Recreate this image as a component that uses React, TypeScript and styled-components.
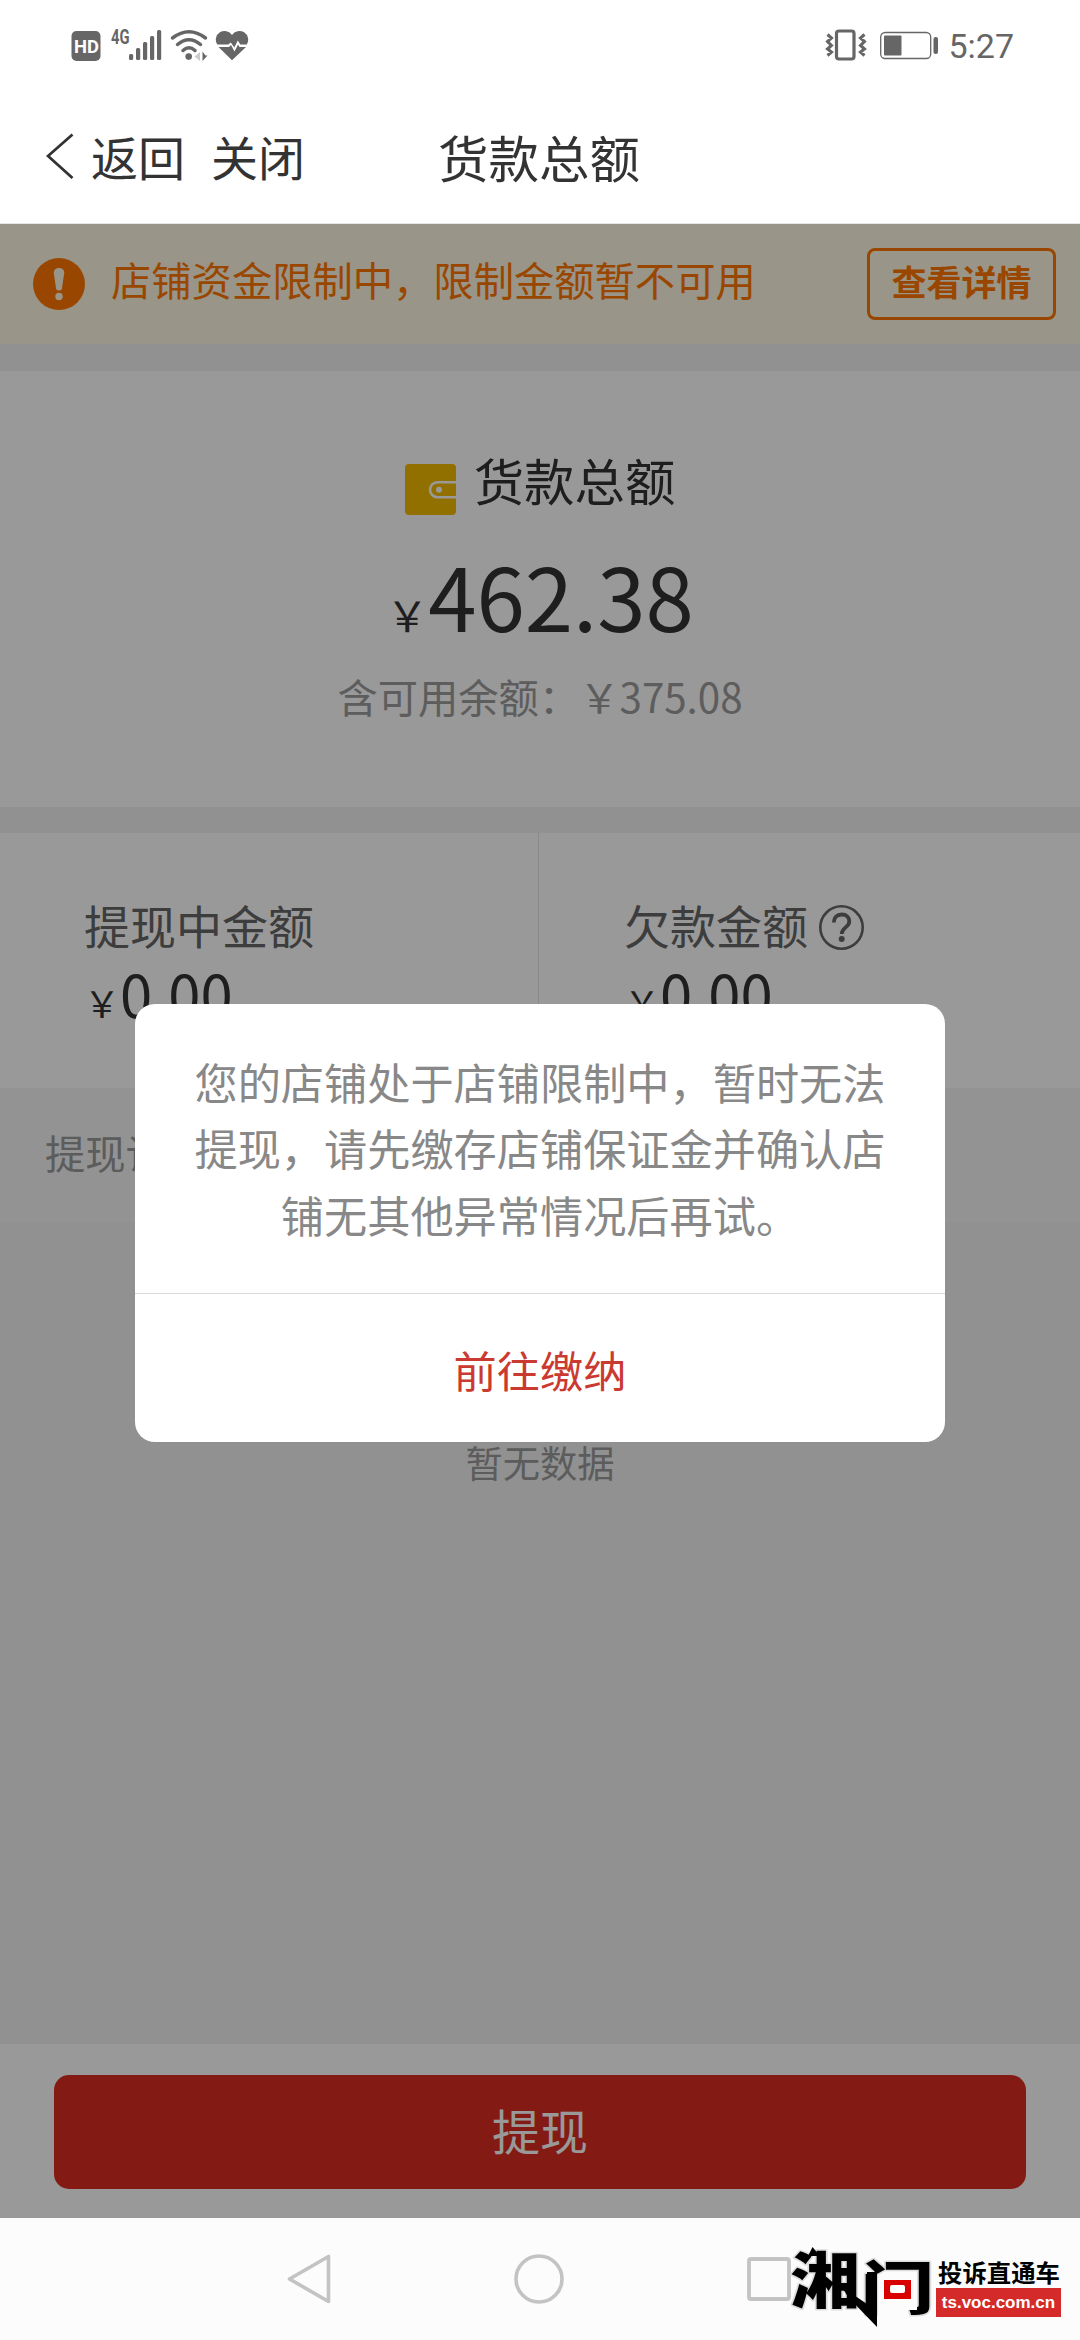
import React from 'react';
import styled, { createGlobalStyle } from 'styled-components';

const cjk = `"Noto Sans CJK SC", "Noto Sans", sans-serif`;

const GlobalStyle = createGlobalStyle`
  body { margin: 0; background: #fff; }
  *, *::before, *::after { box-sizing: border-box; }
  svg { display: block; }
`;

const Screen = styled.div`
  width: 1080px;
  height: 2340px;
  display: flex;
  flex-direction: column;
  overflow: hidden;
  background: #fff;
  font-family: ${cjk};
  color: #333;
  white-space: nowrap;
`;

const StatusBar = styled.header`
  height: 88px;
  padding: 18px 66px 0 71px;
  display: flex;
  justify-content: space-between;
  align-items: flex-start;
`;

const StatusGroup = styled.div`
  padding-top: 10px;
  display: flex;
  align-items: flex-start;
`;

const Clock = styled.span`
  margin-left: 9px;
  font: 400 34px/36px Roboto, sans-serif;
  color: #666;
`;

const NavBar = styled.nav`
  height: 136px;
  padding: 0 0 0 46px;
  border-bottom: 1px solid #e6e6e6;
  display: grid;
  grid-template-columns: 392px 204px 1fr;
  align-items: center;
`;

const NavActions = styled.div`
  display: flex;
  align-items: center;
`;

const NavText = styled.span<{ $gap: number }>`
  margin-left: ${(p) => p.$gap}px;
  font-size: 47px;
  line-height: 60px;
`;

const NavTitle = styled.h1`
  margin: 0;
  font-size: 50.5px;
  line-height: 60px;
  font-weight: 400;
`;

const Content = styled.main`
  position: relative;
  height: 1994px;
  display: flex;
  flex-direction: column;
  background: #f2f2f2;
`;

const Notice = styled.section`
  height: 120px;
  padding: 0 24px 1px 33px;
  display: flex;
  align-items: center;
  background: #fff9e3;
  color: #ff7700;
`;

const NoticeText = styled.p`
  margin: 0 auto 9px 26px;
  font-size: 40.3px;
  line-height: 60px;
`;

const DetailButton = styled.button`
  width: 189px;
  height: 72px;
  padding: 0 0 6px;
  border: 3px solid #ff7700;
  border-radius: 8px;
  background: transparent;
  color: #ff7700;
  font: 700 35px/60px ${cjk};
`;

const TotalCard = styled.section`
  height: 436px;
  margin: 27px 0 26px;
  padding-top: 74px;
  display: flex;
  flex-direction: column;
  align-items: center;
  background: #fff;
`;

const TotalTitle = styled.div`
  height: 70px;
  display: flex;
  align-items: center;
  gap: 18px;
  font-size: 50.4px;
  line-height: 70px;
  & > svg { margin-top: 19px; }
`;

const Money = styled.div<{ $size: number; $height: number }>`
  height: ${(p) => p.$height}px;
  font-size: ${(p) => p.$size}px;
  line-height: ${(p) => p.$height}px;
`;

const Yen = styled.span<{ $size: number }>`
  font-size: ${(p) => p.$size}px;
`;

const Available = styled.p`
  margin: -7px 0 0;
  font-size: 40.3px;
  line-height: 60px;
  color: #9c9c9c;
`;

const Cells = styled.section`
  height: 255px;
  display: grid;
  grid-template-columns: 539px 541px;
  background: #fff;
`;

const Cell = styled.div<{ $divided?: boolean }>`
  padding: 61px 0 0 ${(p) => (p.$divided ? 84 : 85)}px;
  border-right: ${(p) => (p.$divided ? '1px solid #e4e4e4' : '0')};
`;

const CellLabel = styled.div`
  height: 60px;
  display: flex;
  align-items: center;
  gap: 11px;
  font-size: 46px;
  line-height: 60px;
  color: #666;
  & > svg { margin-top: 7px; }
`;

const RecordBand = styled.div`
  height: 134px;
  padding: 34px 45px 0;
  background: #f5f5f5;
  font-size: 40.3px;
  line-height: 60px;
  color: #999;
`;

const Empty = styled.p`
  margin: 210px 0 0;
  text-align: center;
  font-size: 37.3px;
  line-height: 60px;
  color: #9a9a9a;
`;

const Footer = styled.footer`
  height: 174px;
  margin-top: auto;
  padding: 31px 54px 29px;
  background: #fff;
`;

const WithdrawButton = styled.button`
  width: 972px;
  height: 114px;
  padding: 0 0 6px;
  border: 0;
  border-radius: 15px;
  background: #da2e22;
  color: #fff;
  font: 400 48px/70px ${cjk};
`;

const Overlay = styled.div`
  position: absolute;
  inset: 0;
  padding: 780px 135px 0;
  background: rgba(0, 0, 0, 0.4);
`;

const Dialog = styled.div`
  height: 438px;
  border-radius: 20px;
  background: #fff;
`;

const DialogText = styled.p`
  height: 290px;
  margin: 0;
  padding-top: 44px;
  border-bottom: 1px solid #d9d9d9;
  text-align: center;
  font-size: 43.2px;
  line-height: 66.3px;
  color: #888;
`;

const DialogAction = styled.button`
  width: 100%;
  height: 148px;
  padding: 1px 0 0;
  border: 0;
  background: transparent;
  color: #cb3a30;
  font: 400 43.2px/60px ${cjk};
`;

const SystemBar = styled.div`
  position: relative;
  height: 122px;
  padding: 0 289px 0 287px;
  display: flex;
  align-items: center;
  justify-content: space-between;
  background: #fcfcfc;
`;

const Watermark = styled.div`
  position: absolute;
  left: 786px;
  top: 0;
  width: 280px;
  height: 122px;
  display: flex;
`;

const Tagline = styled.div`
  padding-top: 40px;
  display: flex;
  flex-direction: column;
`;

const TagText = styled.span`
  height: 30px;
  padding-left: 2px;
  font-size: 24.4px;
  font-weight: 700;
  line-height: 27px;
  color: #000;
`;

const TagUrl = styled.span`
  width: 125px;
  height: 29px;
  background: #d42a2a;
  color: #fff;
  text-align: center;
  font: 700 17px/29px "Liberation Sans", sans-serif;
`;

const Signals = () => (
  <svg width="180" height="46" viewBox="71 18 180 46" fill="#666">
    <rect x="71.500" y="31" width="29" height="30" rx="5" />
    <text x="74" y="52.500" fill="#fff" fontFamily="Roboto" fontWeight="700" fontSize="18.500" textLength="25" lengthAdjust="spacingAndGlyphs">HD</text>
    <text x="111" y="43.500" fontFamily="Roboto" fontWeight="700" fontSize="19.500" textLength="18.500" lengthAdjust="spacingAndGlyphs">4G</text>
    <rect x="129" y="54" width="4.200" height="6" rx="1.500" />
    <rect x="136" y="48" width="4.200" height="12" rx="1.500" />
    <rect x="143" y="42" width="4.200" height="18" rx="1.500" />
    <rect x="150" y="36" width="4.200" height="24" rx="1.500" />
    <rect x="157" y="30" width="4.200" height="30" rx="1.500" />
    <g fill="none" stroke="#666" strokeWidth="3.500" strokeLinecap="round">
      <path d="M172.500 38Q189 25.500 205.500 38" />
      <path d="M177.500 44.500Q189 35 200.500 44.500" />
      <path d="M183 50.500Q189 45 195 50.500" />
    </g>
    <circle cx="188.700" cy="56.600" r="3.300" />
    <path d="M200 52v9l-5.500-4.500z" fill="#ccc" />
    <path d="M202.500 51.500v9.500l5-5.500h-2z" />
    <path d="M217.200 44.500a8.300 8.300 0 0 1 14.800-9.500a8.300 8.300 0 0 1 14.800 9.500h-6.500l-2.500-4-3.500 7-3.500-5-2.500 2z" />
    <path d="M218.500 47h10.500l2-2 3.500 6.500 3.500-7 1.500 2.500h6.500L232 60.300z" />
  </svg>
);

const Power = () => (
  <svg width="114" height="36" viewBox="826 28 114 36" fill="none" stroke="#666">
    <path d="M828.500 34.500l4 3.500-4 3.500 4 4-4 3.500 4 3-4 3.500M865.500 34.500l-4 3.500 4 3.500-4 4 4 3.500-4 3 4 3.500" strokeWidth="3" />
    <rect x="837.500" y="31" width="17.500" height="28" rx="2.500" strokeWidth="3.200" />
    <rect x="881.700" y="32.500" width="50" height="26" rx="4.500" strokeWidth="1.300" />
    <rect x="885" y="35.500" width="17.500" height="20" rx="1" fill="#666" stroke="none" />
    <rect x="934.500" y="37" width="4.500" height="17" rx="2" fill="#666" stroke="none" />
  </svg>
);

const BackIcon = () => (
  <svg width="28" height="46" viewBox="0 0 28 46" fill="none" stroke="#333" strokeWidth="2.800">
    <path d="M26.500 1.500L2 23L26.500 45" />
  </svg>
);

const AlertIcon = () => (
  <svg width="52" height="52" viewBox="0 0 52 52">
    <circle cx="26" cy="26" r="26" fill="#ff7700" />
    <path d="M20.700 14.500a5.300 4.500 0 0 1 10.600 0L29 30a3 2.500 0 0 1-6 0z" fill="#fff9e3" />
    <circle cx="26" cy="38.500" r="3.700" fill="#fff9e3" />
  </svg>
);

const WalletIcon = () => (
  <svg width="51" height="51" viewBox="0 0 51 51">
    <rect width="51" height="51" rx="4" fill="#f4bb00" />
    <path d="M51 18.200H32.500a7.500 7.500 0 0 0 0 15H51" fill="none" stroke="#fff" strokeWidth="2.600" />
    <circle cx="34" cy="25.800" r="3" fill="#fff" />
  </svg>
);

const HelpIcon = () => (
  <svg width="45" height="45" viewBox="0 0 45 45" fill="none" stroke="#666">
    <circle cx="22.500" cy="22.500" r="21.200" strokeWidth="2.600" />
    <path d="M14.800 17.500c0-5 3.200-8 7.900-8s7.600 2.900 7.600 6.900c0 5.800-7.600 6.200-7.600 12.500" strokeWidth="3.800" />
    <circle cx="22.700" cy="34" r="3" fill="#666" stroke="none" />
  </svg>
);

const Brand = () => (
  <svg width="150" height="122" viewBox="786 2218 150 122" fontFamily="Noto Sans CJK SC" fontWeight="900">
    <g stroke="#ddd" strokeWidth="3" paintOrder="stroke" strokeLinejoin="round">
      <text x="790" y="2302.500" fontSize="60" textLength="70" lengthAdjust="spacingAndGlyphs">湘</text>
      <text x="861" y="2309" fontSize="58" textLength="73" lengthAdjust="spacingAndGlyphs">问</text>
    </g>
    <rect x="880" y="2274" width="37" height="36" fill="#fcfcfc" />
    <path d="M842 2287L867 2304V2272H877V2327L848 2297Z" />
    <path d="M808 2256L812.500 2247L820 2256Z" />
    <rect x="884" y="2280" width="27" height="19" fill="#d90000" />
    <rect x="890" y="2285" width="15" height="8" rx="2" fill="#fff" />
  </svg>
);

export default function App() {
  return (
    <Screen>
      <GlobalStyle />
      <StatusBar>
        <Signals />
        <StatusGroup>
          <Power />
          <Clock>5:27</Clock>
        </StatusGroup>
      </StatusBar>
      <NavBar>
        <NavActions>
          <BackIcon />
          <NavText $gap={17}>返回</NavText>
          <NavText $gap={26}>关闭</NavText>
        </NavActions>
        <NavTitle>货款总额</NavTitle>
      </NavBar>
      <Content>
        <Notice>
          <AlertIcon />
          <NoticeText>店铺资金限制中，限制金额暂不可用</NoticeText>
          <DetailButton>查看详情</DetailButton>
        </Notice>
        <TotalCard>
          <TotalTitle>
            <WalletIcon />
            货款总额
          </TotalTitle>
          <Money $size={87} $height={158}>
            <Yen $size={42}>￥</Yen>462.38
          </Money>
          <Available>含可用余额：￥375.08</Available>
        </TotalCard>
        <Cells>
          <Cell $divided>
            <CellLabel>提现中金额</CellLabel>
            <Money $size={58} $height={78}>
              <Yen $size={36}>￥</Yen>0.00
            </Money>
          </Cell>
          <Cell>
            <CellLabel>
              欠款金额
              <HelpIcon />
            </CellLabel>
            <Money $size={58} $height={78}>
              <Yen $size={36}>￥</Yen>0.00
            </Money>
          </Cell>
        </Cells>
        <RecordBand>提现记录</RecordBand>
        <Empty>暂无数据</Empty>
        <Footer>
          <WithdrawButton>提现</WithdrawButton>
        </Footer>
        <Overlay>
          <Dialog>
            <DialogText>
              您的店铺处于店铺限制中，暂时无法
              <br />
              提现，请先缴存店铺保证金并确认店
              <br />
              铺无其他异常情况后再试。
            </DialogText>
            <DialogAction>前往缴纳</DialogAction>
          </Dialog>
        </Overlay>
      </Content>
      <SystemBar>
        <svg width="44" height="50" viewBox="0 0 44 50" fill="none" stroke="#c3c3c3" strokeWidth="3.600" strokeLinejoin="round">
          <path d="M41.500 2.500V47.500L2.500 25Z" />
        </svg>
        <svg width="50" height="50" viewBox="0 0 50 50" fill="none" stroke="#c3c3c3" strokeWidth="3.600">
          <circle cx="25" cy="25" r="23" />
        </svg>
        <svg width="44" height="44" viewBox="0 0 44 44" fill="none" stroke="#c3c3c3" strokeWidth="3.800">
          <rect x="2" y="2" width="40" height="40" rx="2" />
        </svg>
        <Watermark>
          <Brand />
          <Tagline>
            <TagText>投诉直通车</TagText>
            <TagUrl>ts.voc.com.cn</TagUrl>
          </Tagline>
        </Watermark>
      </SystemBar>
    </Screen>
  );
}
